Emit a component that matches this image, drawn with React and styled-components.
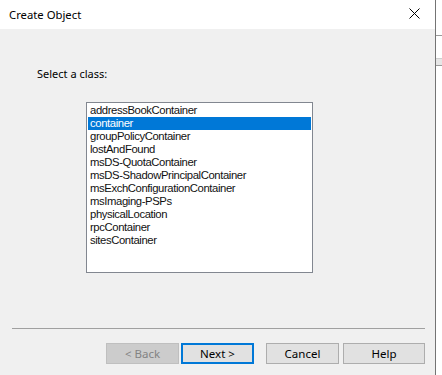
import React from 'react'
import styled, { createGlobalStyle } from 'styled-components'

const GlobalStyle = createGlobalStyle`
  html, body {
    margin: 0;
    padding: 0;
    background: #ffffff;
  }
  body {
    font-family: 'Segoe UI', 'Noto Sans', 'Liberation Sans', sans-serif;
    font-size: 12px;
    color: #000000;
  }
`

const classes = [
  'addressBookContainer',
  'container',
  'groupPolicyContainer',
  'lostAndFound',
  'msDS-QuotaContainer',
  'msDS-ShadowPrincipalContainer',
  'msExchConfigurationContainer',
  'msImaging-PSPs',
  'physicalLocation',
  'rpcContainer',
  'sitesContainer',
]

const Screen = styled.div`
  display: flex;
  width: 442px;
  height: 375px;
  overflow: hidden;
`

const Dialog = styled.div`
  display: flex;
  flex-direction: column;
  width: 435px;
  height: 100%;
  border-right: 1px solid #747474;
`

const Backdrop = styled.div`
  flex: 1;
  display: flex;
  flex-direction: column;
  background: #ffffff;
`

const BackdropLine = styled.div`
  height: 1px;
  margin-top: 35px;
  background: #9a9a9a;
`

const BackdropTab = styled.div`
  height: 6px;
  margin-top: 22px;
  background: #e6e6e6;
  border-top: 1px solid #cfcfcf;
  border-bottom: 1px solid #9a9a9a;
`

const TitleBar = styled.div`
  display: flex;
  align-items: center;
  justify-content: space-between;
  height: 29px;
  padding: 0 9px 0 9px;
  background: #ffffff;
`

const Title = styled.span`
  font-size: 11.3px;
  line-height: 15px;
  margin-top: -1px;
`

const CloseButton = styled.svg`
  width: 11px;
  height: 11px;
  margin-right: 6px;
  margin-top: -2px;
`

const Body = styled.div`
  flex: 1;
  display: flex;
  flex-direction: column;
  background: #f0f0f0;
`

const Prompt = styled.div`
  margin: 37px 0 0 37px;
  font-size: 11px;
  line-height: 15px;
`

const ListBox = styled.div`
  width: 223px;
  height: 167px;
  margin: 21px 0 0 86px;
  padding: 1px;
  background: #ffffff;
  border: 1px solid #828790;
  font-family: 'Liberation Sans', Arial, sans-serif;
  font-size: 11.3px;
  letter-spacing: -0.4px;
`

const ListItem = styled.div`
  height: 13px;
  line-height: 13px;
  padding-left: 2px;
  white-space: nowrap;
  color: ${(props) => (props.$selected ? '#ffffff' : '#111111')};
  background: ${(props) => (props.$selected ? '#0078d7' : 'transparent')};
`

const Separator = styled.div`
  height: 1px;
  margin: auto 10px 0 12px;
  background: #a0a0a0;
`

const ButtonRow = styled.div`
  display: flex;
  justify-content: flex-end;
  padding: 14px 10px 11px 0;
`

const Button = styled.button`
  box-sizing: border-box;
  width: ${(props) => props.$width || 73}px;
  height: 21px;
  margin-left: ${(props) => props.$gap || 0}px;
  padding: 0;
  font-family: inherit;
  font-size: 11.5px;
  color: ${(props) => (props.disabled ? '#838383' : '#000000')};
  background: ${(props) => (props.disabled ? '#cccccc' : '#e1e1e1')};
  border: ${(props) =>
    props.$default
      ? '2px solid #0078d7'
      : props.disabled
        ? '1px solid #bfbfbf'
        : '1px solid #adadad'};
`

export default function App() {
  return (
    <Screen>
      <GlobalStyle />
      <Dialog>
        <TitleBar>
          <Title>Create Object</Title>
          <CloseButton viewBox='0 0 11 11'>
            <path d='M0.5 0.5 L10.5 10.5 M10.5 0.5 L0.5 10.5' stroke='#000' strokeWidth='1' />
          </CloseButton>
        </TitleBar>
        <Body>
          <Prompt>Select a class:</Prompt>
          <ListBox>
            {classes.map((name) => (
              <ListItem key={name} $selected={name === 'container'}>
                {name}
              </ListItem>
            ))}
          </ListBox>
          <Separator />
          <ButtonRow>
            <Button disabled>&lt; Back</Button>
            <Button $default $gap={2}>Next &gt;</Button>
            <Button $gap={12}>Cancel</Button>
            <Button $gap={4} $width={82}>Help</Button>
          </ButtonRow>
        </Body>
      </Dialog>
      <Backdrop>
        <BackdropLine />
        <BackdropTab />
      </Backdrop>
    </Screen>
  )
}
